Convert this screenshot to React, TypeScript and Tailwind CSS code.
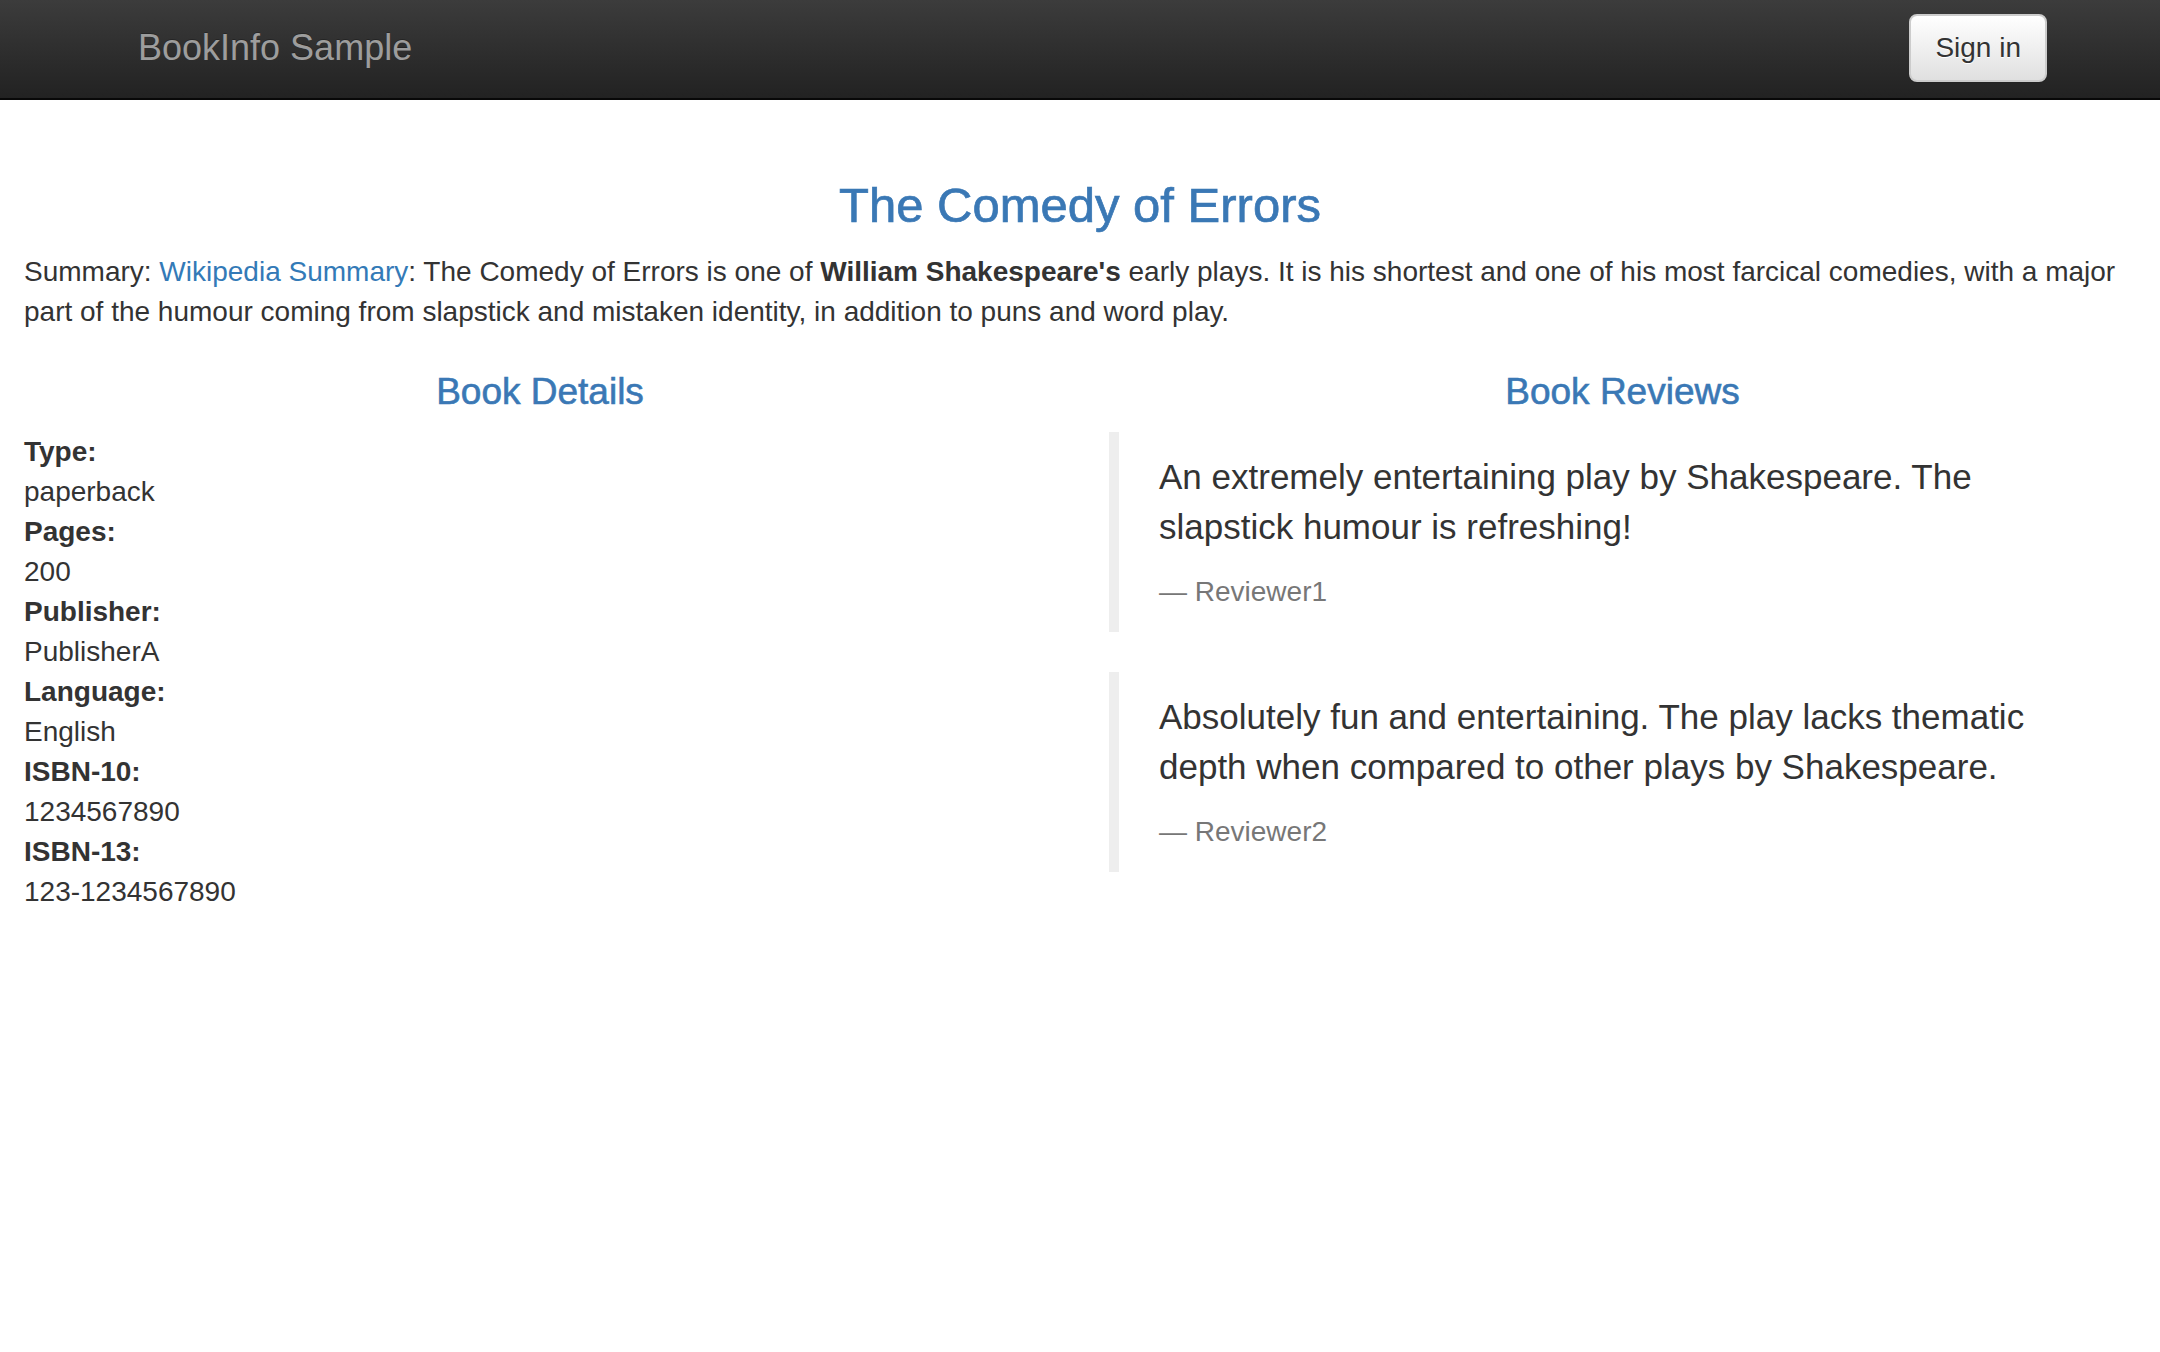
import React from "react";

const details: [string, string][] = [
  ["Type:", "paperback"],
  ["Pages:", "200"],
  ["Publisher:", "PublisherA"],
  ["Language:", "English"],
  ["ISBN-10:", "1234567890"],
  ["ISBN-13:", "123-1234567890"],
];

const reviews: [string, string][] = [
  [
    "An extremely entertaining play by Shakespeare. The slapstick humour is refreshing!",
    "Reviewer1",
  ],
  [
    "Absolutely fun and entertaining. The play lacks thematic depth when compared to other plays by Shakespeare.",
    "Reviewer2",
  ],
];

export default function App() {
  return (
    <div
      className="min-h-[1352px] w-full bg-white text-[#333] text-[28px] leading-[40px]"
      style={{ fontFamily: '"Liberation Sans", Arial, sans-serif' }}
    >
      <nav className="h-[100px] border-b-2 border-[#080808] bg-gradient-to-b from-[#3c3c3c] to-[#222]">
        <div className="mx-auto flex h-full w-[1940px] items-start justify-between pl-[28px] pr-[3px]">
          <div className="pt-[28px] text-[36px] leading-[40px] text-[#9d9d9d] [text-shadow:0_-1px_0_rgba(0,0,0,0.25)]">
            BookInfo Sample
          </div>
          <button className="mt-[14px] h-[68px] rounded-[8px] border-2 border-[#ccc] bg-gradient-to-b from-white to-[#e0e0e0] px-[24px] text-[28px] leading-[40px] text-[#333] shadow-[inset_0_1px_0_rgba(255,255,255,0.15),0_1px_1px_rgba(0,0,0,0.075)] [text-shadow:0_1px_0_#fff]">
            Sign in
          </button>
        </div>
      </nav>

      <div className="px-[24px] pt-[79px]">
        <h3 className="text-center text-[49px] font-medium leading-[53px] text-[#3a78b5] [-webkit-text-stroke:0.7px_#3a78b5]">
          The Comedy of Errors
        </h3>
        <p className="mt-[20px] mb-[20px]">
          Summary: <a className="text-[#337ab7]">Wikipedia Summary</a>: The Comedy of Errors is one of{" "}
          <b className="font-bold">William Shakespeare's</b> early plays. It is his shortest and one of
          his most farcical comedies, with a major part of the humour coming from slapstick and
          mistaken identity, in addition to puns and word play.
        </p>
      </div>

      <div className="flex">
        <div className="w-1/2 pl-[24px] pr-[24px]">
          <h4 className="mt-[20px] mb-[20px] text-center text-[37px] font-medium leading-[40px] text-[#3a78b5] [-webkit-text-stroke:0.6px_#3a78b5]">
            Book Details
          </h4>
          <dl>
            {details.map(([k, v]) => (
              <React.Fragment key={k}>
                <dt className="font-bold">{k}</dt>
                <dd>{v}</dd>
              </React.Fragment>
            ))}
          </dl>
        </div>
        <div className="w-1/2 pl-[29px] pr-[24px]">
          <h4 className="mt-[20px] mb-[20px] text-center text-[37px] font-medium leading-[40px] text-[#3a78b5] [-webkit-text-stroke:0.6px_#3a78b5]">
            Book Reviews
          </h4>
          {reviews.map(([text, who]) => (
            <blockquote
              key={who}
              className="mb-[40px] border-l-[10px] border-[#eee] px-[40px] py-[20px] text-[35px] leading-[50px]"
            >
              <p className="mb-[20px]">{text}</p>
              <small className="block text-[28px] leading-[40px] text-[#777]">
                {"\u2014\u00a0" + who}
              </small>
            </blockquote>
          ))}
        </div>
      </div>
    </div>
  );
}
